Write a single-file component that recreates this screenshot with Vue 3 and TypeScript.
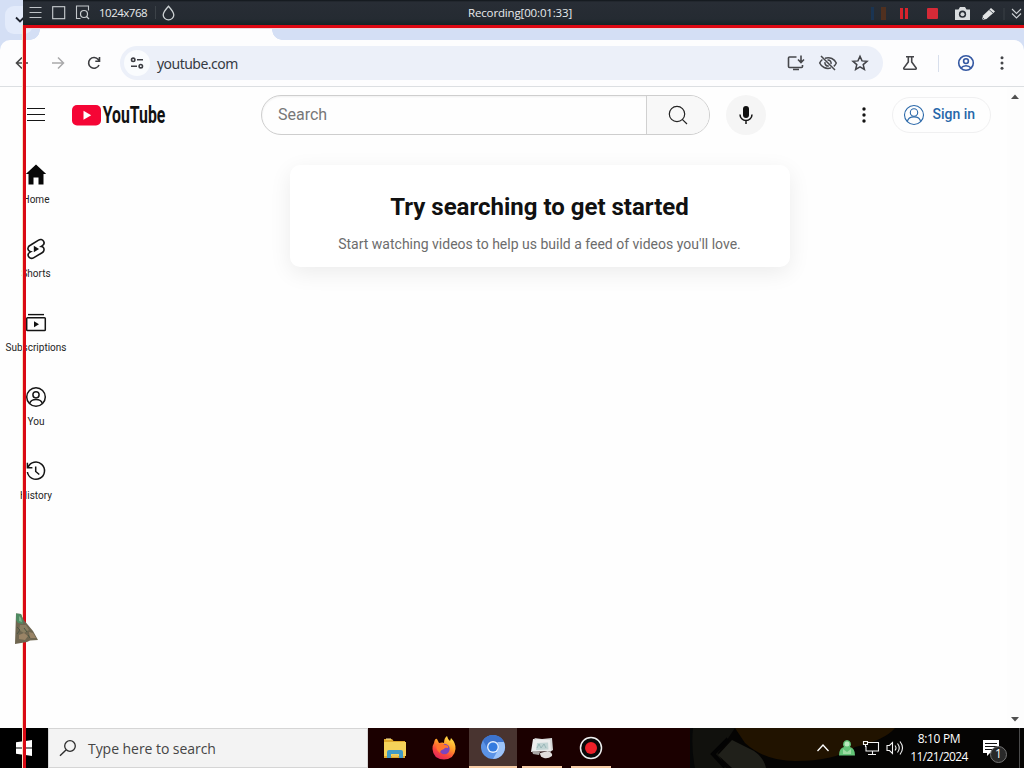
<script setup lang="ts">
interface NavItem {
  id: string
  label: string
}

const navItems: NavItem[] = [
  { id: 'home', label: 'Home' },
  { id: 'shorts', label: 'Shorts' },
  { id: 'subs', label: 'Subscriptions' },
  { id: 'you', label: 'You' },
  { id: 'history', label: 'History' },
]
</script>

<template>
  <div class="desktop">
    <section class="browser">
      <div class="tabstrip">
        <div class="tab-search">
          <svg width="12" height="8" viewBox="0 0 12 8"><path d="M2 1.5 6 5.5 10 1.5" fill="none" stroke="#1f2430" stroke-width="1.8" /></svg>
        </div>
        <div class="tab"></div>
      </div>
      <div class="toolbar">
        <svg class="t-back" width="16" height="16" viewBox="0 0 16 16"><path d="M14 8H3M8 2.5 2.5 8 8 13.5" fill="none" stroke="#474747" stroke-width="1.6" /></svg>
        <svg class="t-fwd" width="16" height="16" viewBox="0 0 16 16"><path d="M2 8h11M8 2.5 13.500 8 8 13.500" fill="none" stroke="#a9a9ab" stroke-width="1.5" /></svg>
        <svg class="t-reload" width="16" height="16" viewBox="0 0 16 16"><path d="M13 10A5.400 5.400 0 1 1 12.300 4.600L13.500 6M13.500 2v4.200H9.300" fill="none" stroke="#3c3d40" stroke-width="1.6" /></svg>
        <div class="omnibox">
          <div class="tune">
            <svg width="16" height="16" viewBox="0 0 16 16"><g fill="none" stroke="#3c3d42" stroke-width="1.6"><circle cx="4.200" cy="4.800" r="1.700" /><path d="M8 4.800h6M2 11.200h6" /><circle cx="11.800" cy="11.200" r="1.700" /></g></svg>
          </div>
          <span class="url">youtube.com</span>
          <svg class="o-install" width="18" height="18" viewBox="0 0 18 18"><path d="M9.500 3H2.500Q1.500 3 1.500 4v8.500Q1.500 13.500 2.500 13.500H14.500Q15.500 13.500 15.500 12.500V11M6 15.500h6M14 1.500V8M11 5.500l3 3 3-3" fill="none" stroke="#46474b" stroke-width="1.600" /></svg>
          <svg class="o-eye" width="20" height="18" viewBox="0 0 20 18"><g fill="none" stroke="#46474b" stroke-width="1.500"><path d="M3 2l14 14M7 4.200C12 2.600 16.500 5 18.300 9c-.6 1.400-1.500 2.500-2.500 3.300M13 13.900C8 15.500 3.400 13 1.700 9 2.300 7.500 3.200 6.400 4.400 5.500" /><path d="M9.500 6A3.200 3.200 0 0 1 13 10M7 8.200A3.200 3.200 0 0 0 10.800 12" /></g></svg>
          <svg width="18" height="18" viewBox="0 0 18 18"><path d="m9 2.300 2 4.600 5 .4-3.800 3.300 1.200 4.900L9 12.900l-4.400 2.600 1.200-4.900L2 7.300l5-.4z" fill="none" stroke="#414247" stroke-width="1.500" /></svg>
        </div>
        <svg class="t-flask" width="16" height="18" viewBox="0 0 16 18"><path d="M4 2.700h8M6.300 3v5L1.800 14Q1.500 15.300 2.500 15.300h11Q14.500 15.300 14.200 14L9.700 8V3" fill="none" stroke="#444549" stroke-width="1.600" /></svg>
        <span class="t-sep"></span>
        <svg class="t-user" width="18" height="18" viewBox="0 0 18 18"><g fill="none" stroke="#3458a2" stroke-width="1.600"><circle cx="9" cy="9" r="7.300" /><circle cx="9" cy="7.100" r="2.400" /><path d="M4 14c2.500-3 7.500-3 10 0" /></g></svg>
        <svg class="t-more" width="6" height="16" viewBox="0 0 6 16"><g fill="#45464a"><circle cx="3" cy="2.700" r="1.500" /><circle cx="3" cy="8" r="1.500" /><circle cx="3" cy="13.300" r="1.500" /></g></svg>
      </div>

      <main class="page">
        <div class="content">
          <header class="masthead">
            <svg class="burger" width="20" height="16" viewBox="0 0 20 16"><path d="M1 1.500h18M1 7.500h18M1 13.500h18" stroke="#161616" stroke-width="1.100" /></svg>
            <svg class="logo" width="98" height="32" viewBox="0 -3 98 32">
              <rect x="0" y="3" width="29" height="20.500" rx="5" fill="#f50535" />
              <path d="M11.500 8.800v9l7.700-4.500z" fill="#fff" />
              <text x="30.800" y="21.300" textLength="62.500" lengthAdjust="spacingAndGlyphs" class="wordmark">YouTube</text>
            </svg>
            <div class="search">
              <span class="placeholder">Search</span>
              <div class="search-btn">
                <svg width="22" height="22" viewBox="0 0 22 22"><path d="M15.500 15.600 20 20M17.700 10a7.700 7.700 0 1 1-15.400 0 7.700 7.700 0 0 1 15.400 0z" fill="none" stroke="#252525" stroke-width="1.200" /></svg>
              </div>
            </div>
            <div class="mic">
              <svg width="16" height="20" viewBox="0 0 16 20"><rect x="5" y="1" width="6" height="12" rx="3" fill="#101010" /><path d="M2 9.500a6 6 0 0 0 12 0M8 15.500V19" fill="none" stroke="#161616" stroke-width="1.500" /></svg>
            </div>
            <svg class="yt-more" width="6" height="18" viewBox="0 0 6 18"><g fill="#141414"><circle cx="3" cy="3" r="1.700" /><circle cx="3" cy="9" r="1.700" /><circle cx="3" cy="15" r="1.700" /></g></svg>
            <div class="signin">
              <svg width="22" height="22" viewBox="0 0 22 22"><g fill="none" stroke="#2a68a9" stroke-width="1.100"><circle cx="11" cy="11" r="9.500" /><circle cx="11" cy="8.500" r="3.700" /><path d="M4.300 17.800c.6-3.500 3.400-4.900 6.700-4.900s6.100 1.400 6.700 4.900" /></g></svg>
              <span>Sign in</span>
            </div>
          </header>
          <div class="below">
            <nav class="guide">
              <a v-for="item in navItems" :key="item.id" class="guide-item">
                <svg width="24" height="24" viewBox="0 0 24 24">
                  <path v-if="item.id === 'home'" d="M12 1.500 1.800 11H4.500V21.500h5v-7h5v7h5V11h2.700z" fill="#070707" />
                  <g v-else-if="item.id === 'shorts'">
                    <path d="M6.700 8 14.600 3.100c1.700-1 3.900-.6 4.900 1s.5 3.500-1.100 4.500l-1.200.8c2.200.3 3.300 2.400 2.600 4.300-.3 1-1 1.600-1.700 2L9.500 20.900c-1.700 1-4 .5-4.900-1.200s-.4-3.400 1.100-4.300l1.100-.7C4.600 14.300 3.500 12.300 4.100 10.500c.3-1 .9-1.700 2.600-2.500z" fill="none" stroke="#161616" stroke-width="1.600" />
                    <path d="M9.800 8.700v6.600l5.300-3.300z" fill="#111" />
                  </g>
                  <g v-else-if="item.id === 'subs'">
                    <path d="M4 3.600h16" stroke="#111" stroke-width="1.400" />
                    <rect x="2.700" y="6.800" width="18.600" height="12.700" rx=".8" fill="none" stroke="#151515" stroke-width="1.500" />
                    <path d="M10 10.200v6l5-3z" fill="#111" />
                  </g>
                  <g v-else-if="item.id === 'you'" fill="none" stroke="#171717" stroke-width="1.500">
                    <circle cx="12" cy="12" r="9.300" /><circle cx="12" cy="9.800" r="3.100" />
                    <path d="M5.600 18.600c1-3.200 3.600-4 6.400-4s5.400.8 6.400 4" />
                  </g>
                  <g v-else fill="none" stroke="#151515" stroke-width="1.500">
                    <path d="M4 8.300A8.600 8.600 0 1 1 3.400 13M3.400 3.800v5h5" /><path d="M11.700 7.500v5l3.600 3" />
                  </g>
                </svg>
                <span>{{ item.label }}</span>
              </a>
            </nav>
            <section class="card">
              <h1>Try searching to get started</h1>
              <p>Start watching videos to help us build a feed of videos you'll love.</p>
            </section>
          </div>
        </div>
        <aside class="scrollbar">
          <svg width="8" height="5" viewBox="0 0 8 5"><path d="M0 5 4 .5 8 5z" fill="#505050" /></svg>
          <svg width="8" height="5" viewBox="0 0 8 5"><path d="M0 0h8L4 4.500z" fill="#505050" /></svg>
        </aside>
      </main>
    </section>

    <footer class="taskbar">
      <svg class="wallpaper" width="334" height="40" viewBox="0 0 334 40">
        <path d="M0 0h334v40H0z" fill="#050403" />
        <path d="M45 0h160q-10 12-40 19-20 14-60 14-30 0-50-18z" fill="#211300" />
        <path d="M0 0h45L28 25l8 15H0z" fill="#11110d" />
        <path d="m42 12 22 11q10 7 12 17H42L28 27z" fill="#20201a" />
        <path d="M0 0h3Q1 20 5 40H0z" fill="#060707" />
        <path d="M38 11 23 26l12 13" fill="none" stroke="#030303" stroke-width="4" />
      </svg>
      <div class="start">
        <svg width="16" height="16" viewBox="0 0 16 16"><path d="M0 2.300 7.200 1.300V7.600H0zM8 1.200 16 0v7.600H8zM0 8.400h7.200v6.400L0 13.800zM8 8.400h8V16l-8-1.200z" fill="#fff" /></svg>
      </div>
      <div class="win-search">
        <svg width="18" height="18" viewBox="0 0 18 18"><circle cx="11" cy="7" r="5.300" fill="none" stroke="#2d2d2d" stroke-width="1.300" /><path d="M7 11 1 16.800" stroke="#2d2d2d" stroke-width="1.400" /></svg>
        <span>Type here to search</span>
      </div>
      <div class="apps">
        <div class="app">
          <svg width="24" height="24" viewBox="0 0 24 24"><path d="M1 3h8l1.500 2H22v17H1z" fill="#dfa92d" /><path d="M1 6h22v14H1z" fill="#f5d25a" /><path d="M3 3h5" stroke="#fff0a4" /><path d="M4 22v-6q0-2 2-2h12q2 0 2 2v6h-4v-4H8v4z" fill="#419bc5" /><path d="M9 19h6v2H9z" fill="#e8c45a" /></svg>
        </div>
        <div class="app">
          <svg width="26" height="26" viewBox="0 0 26 26">
            <defs><linearGradient id="fox" x1=".8" y1="0" x2=".25" y2="1"><stop offset="0" stop-color="#ffe94b" /><stop offset=".42" stop-color="#ff9a28" /><stop offset=".72" stop-color="#f9443e" /><stop offset="1" stop-color="#de245e" /></linearGradient></defs>
            <path d="M3 8Q4 3 6 4l2 4q4-1 5 0 0-5 3-7 1 4 3 5l1-3q5 5 4.500 11Q23.500 24 13 24.500 2 24 1.500 14 1.500 10 3 8z" fill="url(#fox)" />
            <circle cx="13.500" cy="14" r="5.200" fill="#7c45be" /><path d="M6 9q5-2 8 1 4 0 3 3-3-1-4 1-4 1-4 4-5-3-3-9z" fill="#ff752e" />
          </svg>
        </div>
        <div class="app active">
          <svg width="26" height="26" viewBox="0 0 26 26"><circle cx="13" cy="13" r="12" fill="#5b93e6" /><path d="M3 6.500A12 12 0 0 1 24 8H13a5.500 5.500 0 0 0-5 7.500z" fill="#3c73cd" /><path d="M24 8a12 12 0 0 1-11 17l5-9q2-4-.5-8z" fill="#9dc3f8" /><circle cx="13" cy="13" r="6" fill="#e2eefd" /><circle cx="13" cy="13" r="4.600" fill="#347bdf" /></svg>
        </div>
        <div class="app open">
          <svg width="24" height="24" viewBox="0 0 24 24"><path d="m4 2 8 1 10-1 1 12-3 2z" fill="#d5d7d7" /><path d="m3 3 17 1 1 11-20 1z" fill="#ebecec" /><path d="m7 7 11-.5.500 7L6 14z" fill="#c2d4d4" /><path d="m7 12 2-4 2 4 3-4 2 4" fill="none" stroke="#8eafb0" stroke-width=".8" /><path d="m10 17 8-2q5 2 4 5-4 3-8 2-4-1-4-5z" fill="#e2dedd" /><path d="m2 15 8 1-1 3-6-1z" fill="#aaa6a5" /></svg>
        </div>
        <div class="app open">
          <svg width="24" height="24" viewBox="0 0 24 24"><circle cx="12" cy="12" r="10.500" fill="#090909" stroke="#eee" stroke-width="1.500" /><circle cx="12" cy="12" r="6" fill="#ed2029" /></svg>
        </div>
      </div>
      <div class="tray">
        <svg class="tr-up" width="14" height="10" viewBox="0 0 14 10"><path d="M1.500 8 7 2l5.500 6" fill="none" stroke="#fff" stroke-width="1.300" /></svg>
        <svg class="tr-person" width="18" height="18" viewBox="0 0 18 18"><path d="M9 1a4.300 4.300 0 0 1 3 7q5 1 5 8.500H1Q1 9 6 8A4.300 4.300 0 0 1 9 1z" fill="#62c477" /><circle cx="9" cy="5" r="2.500" fill="#b9eabd" /><path d="m5 10 4 3 4-3v5H5z" fill="#9ddba3" /></svg>
        <svg class="tr-net" width="18" height="18" viewBox="0 0 18 18"><path d="M6 3.500h10.500v8.500H4V7M10.500 12v3.500M6 15.500h8M1.500 2.500h4v3h-4zM3.500 5.500V8" fill="none" stroke="#f3f3f3" stroke-width="1.100" /></svg>
        <svg class="tr-sound" width="18" height="16" viewBox="0 0 18 16"><path d="M1 5.500h2.500L6.500 2.500v11l-3-3H1zM9 5.500q2 2.500 0 5M11.500 3.500q3.500 4.500 0 9M14 1.500q5 6.500 0 13" fill="none" stroke="#f3f3f3" stroke-width="1.100" /></svg>
        <div class="clock"><span class="time">8:10 PM</span><span class="date">11/21/2024</span></div>
        <div class="notify">
          <svg width="18" height="18" viewBox="0 0 18 18"><path d="M1 1h16v13H8l-3 3v-3H1z" fill="#fff" /><path d="M3 4.500h12M3 7.500h12M3 10.500h9" stroke="#111" stroke-width="1.100" /></svg>
          <span class="count">1</span>
        </div>
        <i class="peek"></i>
      </div>
    </footer>

    <div class="frame-top"></div>
    <div class="frame-left"></div>
    <div class="recorder">
      <div class="rec-left">
        <svg class="r-menu" width="13" height="13" viewBox="0 0 13 13"><path d="M.5 1.500h12M.5 6.500h12M.5 11.500h12" stroke="#bfc3c7" stroke-width="1.100" /></svg>
        <svg class="r-box" width="14" height="14" viewBox="0 0 14 14"><rect x=".7" y=".7" width="12" height="12" fill="none" stroke="#ccd0d3" stroke-width="1.100" /></svg>
        <svg class="r-find" width="15" height="15" viewBox="0 0 15 15"><path d="M5.500 13.500h-4V1h12v4.500" fill="none" stroke="#c3c8cb" stroke-width="1.100" /><circle cx="9" cy="9" r="3.500" fill="none" stroke="#c9ced0" stroke-width="1.200" /><path d="m11.500 11.500 2.500 2.500" stroke="#c9ced0" stroke-width="1.300" /></svg>
        <span class="r-size">1024x768</span><i></i>
        <svg width="13" height="16" viewBox="0 0 13 16"><path d="M6.500 1.200Q1.200 7 1.200 10a5.300 4.800 0 0 0 10.600 0Q11.800 7 6.500 1.200z" fill="none" stroke="#cdd2d4" stroke-width="1.300" /></svg>
      </div>
      <span class="r-title">Recording[00:01:33]</span>
      <div class="rec-right">
        <svg width="154" height="24" viewBox="0 0 154 24">
          <path d="M1 6h3v13H1z" fill="#1a3452" /><path d="M11 6h5v13h-5z" fill="#50301f" />
          <path d="M30 7h3v11h-3zM35 7h3v11h-3z" fill="#d6232c" />
          <rect x="57" y="7" width="11" height="11" rx="1" fill="#d52a37" />
          <path d="M85 8.500h3.500L90 6h5l1.500 2.500H100v10.500H85z" fill="#dadddf" /><circle cx="92.500" cy="13.200" r="3.600" fill="#292e35" /><circle cx="92.500" cy="13.200" r="2" fill="#d4d7d9" />
          <path d="m112 19 1-4.500 8-7.500 4 3.500-8.500 7.500z" fill="#e2e4e5" /><path d="m119 8.500 4 3.500M112 19l2-2" stroke="#555d66" />
          <path d="M134 7v12" stroke="#3b4047" /><path d="m142 8 4.500 4.500L151 8M142 12.500l4.500 4.500L151 12.500" fill="none" stroke="#cdd1d4" stroke-width="1.100" />
        </svg>
      </div>
    </div>
    <svg class="bell" width="26" height="32" viewBox="0 0 26 32">
      <path d="M1 .5 6 1l2 5 5 6 5 6 5 9-8 .500-3 1.500-6 1-6 1z" fill="#6f6650" />
      <path d="M1 .5 6 1l2 5v5l-5-1-2-3z" fill="#4f8a62" /><path d="m4 3 2 2 1 4-3-1z" fill="#7fb58c" />
      <path d="m5 12 6 0 3 5-5 3-5-3z" fill="#8a7f62" /><path d="m4 22 5-2 4 3-3 4-6-1zM14 19l4 1 3 5-6 0z" fill="#9a8466" />
      <path d="m2 14 3 3-3 4M9 15l3 4M13 22l2 3" fill="none" stroke="#4c5644" />
    </svg>
  </div>
</template>

<style>
body {
  margin: 0;
}
</style>

<style scoped>
.desktop {
  position: relative;
  width: 1024px;
  height: 768px;
  overflow: hidden;
  display: flex;
  flex-direction: column;
  font-family: Roboto, "Liberation Sans", sans-serif;
  background: #fff;
}
.desktop * { box-sizing: border-box; }
svg { display: block; flex: none; }
.browser { height: 728px; display: flex; flex-direction: column; background: #d4dff5; }
.tabstrip { height: 40px; flex: none; display: flex; align-items: flex-start; }
.tab-search { width: 28px; height: 28px; margin: 6px 0 0 5px; padding: 10px 0 0 9px; border-radius: 9px; background: #e3ebfb; }
.tab { align-self: flex-end; width: 232px; height: 32px; margin-left: 7px; background: #fdfdfe; border-radius: 9px 9px 0 0; position: relative; }
.tab::before, .tab::after { content: ""; position: absolute; bottom: 0; width: 10px; height: 10px; }
.tab::before { left: -10px; background: radial-gradient(circle at 0 0, transparent 9.500px, #fdfdfe 10px); }
.tab::after { right: -10px; background: radial-gradient(circle at 100% 0, transparent 9.500px, #fdfdfe 10px); }
.toolbar { height: 47px; flex: none; display: flex; align-items: center; padding: 0 19px 0 14px; border-radius: 10px 10px 0 0; background: #fdfdfe; border-bottom: 1px solid #dcdfe2; }
.t-fwd { margin-left: 20px; }
.t-reload { margin-left: 20px; }
.omnibox { width: 763px; height: 34px; margin-left: 18px; border-radius: 17px; background: #ecf0f9; display: flex; align-items: center; padding: 0 14px 0 4px; }
.tune { width: 26px; height: 26px; border-radius: 50%; background: #fafcfe; display: grid; place-items: center; }
.url { flex: 1; margin-left: 7px; font: 14px "Noto Sans", sans-serif; color: #363a43; letter-spacing: -.52px; }
.o-install { margin-right: 13px; }
.o-eye { margin-right: 13px; }
.t-flask { margin-left: 19px; }
.t-sep { width: 1px; height: 17px; margin: 0 18px 0 20px; background: #d8dfec; }
.t-more { margin-left: auto; }
.page { flex: 1; display: flex; background: #fefefe; }
.content { width: 1007px; }
.masthead { height: 56px; display: flex; align-items: center; padding-left: 26px; }
.logo { margin-left: 26px; overflow: visible; }
.wordmark { font: 700 23px Roboto, sans-serif; fill: #121212; }
.search { width: 449px; height: 40px; margin-left: 91px; border: 1px solid #cecece; border-radius: 20px; display: flex; align-items: center; overflow: hidden; box-shadow: inset 0 1px 2px #f0f0f0; }
.placeholder { flex: 1; padding: 0 0 2px 16px; font-size: 16px; color: #777; }
.search-btn { width: 63px; height: 38px; border-left: 1px solid #d1d1d1; display: grid; place-items: center; background: #f8f8f8; }
.mic { width: 40px; height: 40px; margin-left: 16px; border-radius: 50%; background: #f5f5f5; display: grid; place-items: center; }
.yt-more { margin-left: 95px; }
.signin { width: 99px; height: 36px; margin-left: 25px; border: 1px solid #f0f0f1; border-radius: 18px; display: flex; align-items: center; padding-left: 10px; color: #2767a9; font-weight: 500; font-size: 14px; }
.signin span { margin-left: 7.500px; padding-bottom: 2px; }
.below { display: flex; align-items: flex-start; }
.guide { width: 72px; display: flex; flex-direction: column; padding-top: 4px; }
.guide-item { height: 74px; padding-top: 16px; display: flex; flex-direction: column; align-items: center; color: #242424; }
.guide-item span { margin-top: 6px; font-size: 10px; line-height: 14px; white-space: nowrap; }
.card { width: 500px; height: 102px; margin: 22px 0 0 218px; padding-right: 1px; border-radius: 10px; background: #fff; box-shadow: 0 6px 22px rgba(0, 0, 0, .075); text-align: center; }
.card h1 { margin: 24px 0 0; font-size: 24px; line-height: 36px; font-weight: 700; color: #111; }
.card p { margin: 8px 0 0; font-size: 14px; line-height: 22px; color: #6c6c6c; }
.scrollbar { width: 17px; display: flex; flex-direction: column; justify-content: space-between; align-items: center; padding: 7px 1px 6px 0; background: #fdfdfd; }
.taskbar { position: relative; height: 40px; display: flex; background: #1b0000; }
.wallpaper { position: absolute; top: 0; right: 0; }
.start { width: 48px; display: grid; place-items: center; background: #000; }
.win-search { width: 320px; border: 1px solid #d5d5d5; background: #f3f3f3; display: flex; align-items: center; padding-left: 10px; font: 14px "Open Sans", "Noto Sans", sans-serif; color: #454545; }
.win-search span { margin-left: 11px; padding-top: 1px; letter-spacing: -.05px; }
.apps { display: flex; padding-left: 2px; }
.app { width: 49px; height: 40px; display: grid; place-items: center; position: relative; }
.app.active { width: 48px; margin: 0 0 0 1px; background: #493430; border-bottom: 2px solid #f6cba5; padding-right: 1px; }
.app.open::after { content: ""; position: absolute; left: 5px; right: 4px; bottom: 0; height: 2px; background: #f6cba5; }
.tray { position: relative; margin-left: auto; display: flex; align-items: center; color: #fff; }
.tr-person { margin-left: 8px; }
.tr-net { margin-left: 6px; }
.tr-sound { margin-left: 6px; }
.clock { width: 66px; margin-left: 2px; display: flex; flex-direction: column; align-items: center; font: 12px/18px "Open Sans", sans-serif; white-space: nowrap; letter-spacing: -.6px; }
.time { letter-spacing: -.35px; }
.notify { position: relative; margin: 0 19px 0 10px; }
.count { position: absolute; left: 8px; top: 7px; width: 17px; height: 17px; border: 1px solid #737373; border-radius: 50%; background: #292929; font: 12px/14px "Open Sans", sans-serif; text-align: center; }
.peek { width: 1px; height: 40px; margin-right: 4px; background: #4b4b4b; }
.frame-top { position: absolute; left: 23px; right: 0; top: 25px; height: 3px; background: #dc0812; box-shadow: 0 1px #ead9da; }
.frame-left { position: absolute; left: 23px; top: 25px; bottom: 0; width: 3px; background: #da0a14; box-shadow: -1px 0 #f8dec0; }
.recorder { position: absolute; left: 23px; right: 0; top: 0; height: 25px; display: flex; align-items: center; justify-content: space-between; background: linear-gradient(#10151a 0, #282d35 2px, #252b32 19px, #142425 25px); color: #e8eaec; font: 11.500px "Open Sans", sans-serif; }
.rec-left { width: 445px; display: flex; align-items: center; padding-left: 6px; }
.r-box { margin-left: 10px; }
.r-find { margin-left: 9px; }
.r-size { margin-left: 9px; letter-spacing: -.5px; }
.rec-left i { width: 1px; height: 13px; margin: 0 6px 0 8px; background: #3c4248; }
.r-title { letter-spacing: -.15px; white-space: nowrap; }
.rec-right { margin-left: auto; }
.bell { position: absolute; left: 15px; top: 613px; }
</style>
